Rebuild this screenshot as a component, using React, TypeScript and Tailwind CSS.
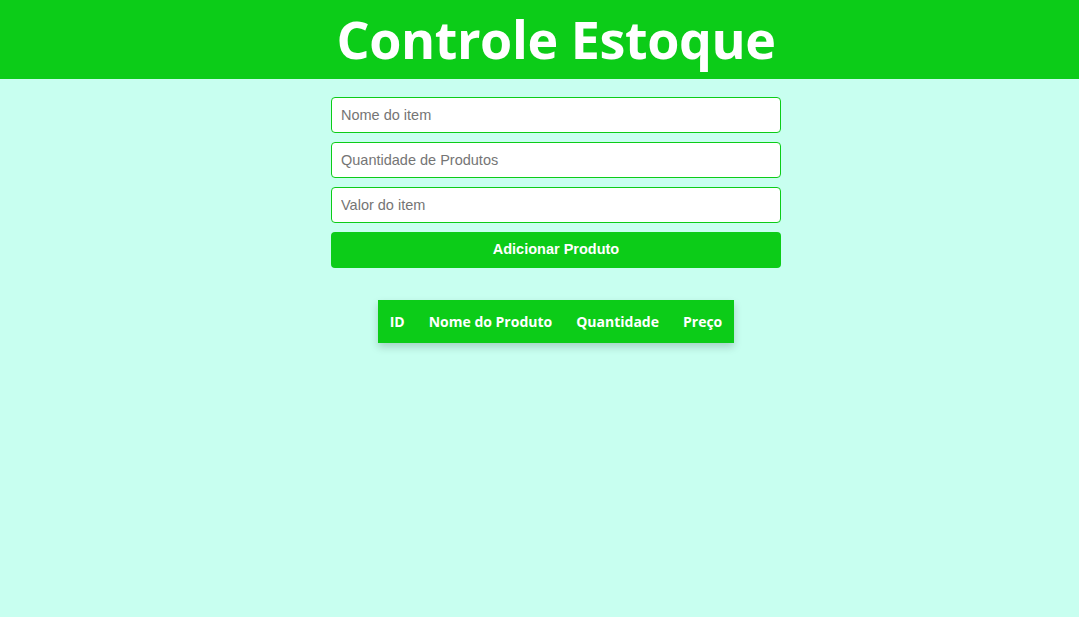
import React from 'react';

const HEAD_FONT = { fontFamily: '"Open Sans", "Noto Sans", sans-serif' };

export default function App() {
  return (
    <div className="min-h-[617px] bg-[#c8fff0] font-['Liberation_Sans',Arial,sans-serif]">
      {/* Header */}
      <header className="bg-[#0ccc18] h-[79px] flex items-center justify-center pl-[33px]">
        <h1 style={HEAD_FONT} className="text-white font-bold text-[52px] leading-none tracking-[-0.4px] -mt-[2px]">
          Controle Estoque
        </h1>
      </header>

      <div className="pl-[33px]">
        {/* Form */}
        <div className="w-[450px] mx-auto mt-[18px] flex flex-col gap-[9px]">
          <input
            placeholder="Nome do item"
            className="h-[36px] px-[9px] bg-white border border-[#0ccc18] rounded-[4px] text-[14.5px] text-gray-800 placeholder:text-[#757575] outline-none"
          />
          <input
            placeholder="Quantidade de Produtos"
            className="h-[36px] px-[9px] bg-white border border-[#0ccc18] rounded-[4px] text-[14.5px] text-gray-800 placeholder:text-[#757575] outline-none"
          />
          <input
            placeholder="Valor do item"
            className="h-[36px] px-[9px] bg-white border border-[#0ccc18] rounded-[4px] text-[14.5px] text-gray-800 placeholder:text-[#757575] outline-none"
          />
          <button className="h-[36px] bg-[#0ccc18] rounded-[4px] text-white font-bold text-[14.5px]">
            Adicionar Produto
          </button>
        </div>

        {/* Table */}
        <div className="flex justify-center mt-[32px]">
          <table style={HEAD_FONT} className="border-collapse shadow-[0_4px_8px_rgba(0,0,0,0.18)]">
            <thead>
              <tr className="bg-[#0ccc18] text-white text-[14px] font-bold h-[43px]">
                <th className="px-[12px] text-left">ID</th>
                <th className="px-[12px] text-left">Nome do Produto</th>
                <th className="px-[12px] text-left">Quantidade</th>
                <th className="px-[12px] text-left">Preço</th>
              </tr>
            </thead>
            <tbody></tbody>
          </table>
        </div>
      </div>
    </div>
  );
}
